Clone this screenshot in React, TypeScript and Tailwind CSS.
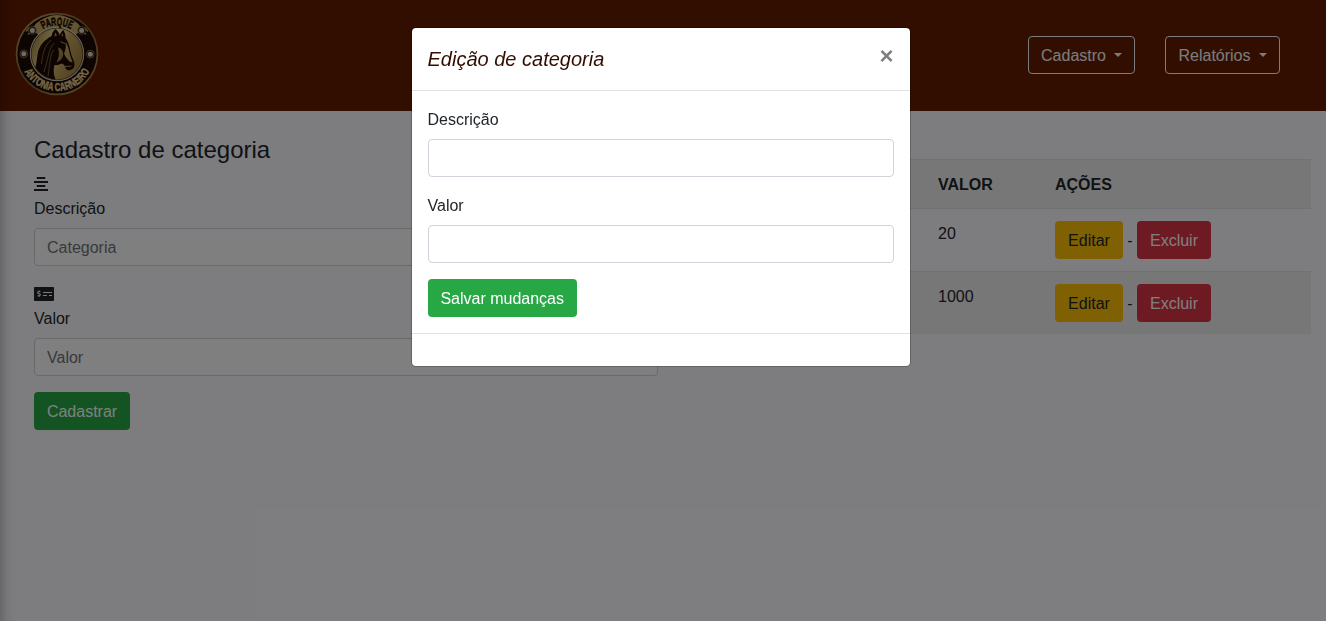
import React from "react";
import { FaMoneyCheckAlt } from "react-icons/fa";

function Rivet({ x, y }: { x: number; y: number }) {
  return (
    <g>
      <circle cx={x} cy={y} r="3.9" fill="#2a1608" stroke="#a88d50" strokeWidth="0.7" />
      <circle cx={x} cy={y} r="2.5" fill="#d8d4cc" />
    </g>
  );
}

function Logo() {
  return (
    <svg width="84" height="84" viewBox="0 0 84 84" className="block">
      <defs>
        <linearGradient id="rim" x1="0" y1="0" x2="1" y2="1">
          <stop offset="0" stopColor="#c8a868" />
          <stop offset="0.5" stopColor="#80652f" />
          <stop offset="1" stopColor="#c0a060" />
        </linearGradient>
        <linearGradient id="sky" x1="0" y1="0" x2="1" y2="0.4">
          <stop offset="0" stopColor="#8f7128" />
          <stop offset="0.45" stopColor="#f0dc94" />
          <stop offset="0.7" stopColor="#c8aa60" />
          <stop offset="1" stopColor="#a88848" />
        </linearGradient>
        <path id="arcTop" d="M13.6 42 A28.4 28.4 0 0 1 70.4 42" />
        <path id="arcBottom" d="M5 42 A37 37 0 0 0 79 42" />
        <clipPath id="disc">
          <circle cx="42" cy="42" r="25.5" />
        </clipPath>
      </defs>
      <circle cx="42" cy="42" r="41.3" fill="url(#rim)" />
      <circle cx="42" cy="42" r="39.6" fill="#1c0a06" />
      <path d="M21 11.5 Q42 -5.5 63 11.5 L67 17 L60 23.5 Q42 7 24 23.5 L17 17 Z" fill="#c8a862" />
      <path d="M11 19.5l3.4-4.2M13 22.5l2.4-2.4M73 19.5l-3.4-4.2M71 22.5l-2.4-2.4" fill="none" stroke="#bb9c58" strokeWidth="1.3" />
      <circle cx="42" cy="42" r="27.2" fill="#d8d4cc" />
      <circle cx="42" cy="42" r="26.3" fill="#5b482a" />
      <circle cx="42" cy="42" r="25.4" fill="url(#sky)" />
      <g clipPath="url(#disc)">
        <path
          d="M40.6 17 C38 19 36.8 21.5 36.6 24 C29 28 24 34 22.6 42 C21.5 50 21.5 54 18 60 L27 69 L41.5 69 C38.5 64 38 58 39.5 53 C42 53.5 45 52.5 47 51.5 C49 52.5 50 54 50.5 56 C51.5 58.5 54.5 59 57 57.3 C59.5 56 60.2 52.5 58.8 49 C57 45.5 56.2 42 55.2 38 C54.4 33.5 53 29.5 50.4 25.5 C50.6 22.5 49.8 20 48.2 18 C46.4 19.5 45.4 21.2 44.8 23.2 C43.8 20.6 42.5 18.5 40.6 17 Z"
          fill="#1c0a06"
        />
        <path d="M50.6 29.5 C53 33.5 53.9 37.5 54.6 41 C55.3 44.5 56.8 47.5 57.6 50.4 L54.6 49.6 C52.5 47 50.2 45 49 41.5 C50.6 38 51.2 34 50.6 29.5 Z" fill="#c0a258" />
        <path d="M43 35.5 C46.8 36.5 48.4 39.5 48.2 42.5 C48 46 45.5 48.8 41.5 50.6 C44.2 45.5 44.6 41 43 35.5 Z" fill="#a4864a" />
        <path d="M45.5 29.6l4.6 2.2M50 54.4c2.4-.4 4.2.4 6.2-.4" fill="none" stroke="#c0a258" strokeWidth="1" />
        <path
          d="M36 28C29 34 27.5 43 26.5 52M39.2 31C33.5 37 33.5 46 29 60M38.8 38C34.5 43 35 53 33 64"
          fill="none"
          stroke="#9c7e42"
          strokeWidth="0.7"
        />
        <path d="M40.5 20.2l1.4 3.4-2.7.8zM48 21v3.6l-1.6-.8z" fill="#b2944e" />
      </g>
      <Rivet x={17.4} y={18.4} />
      <Rivet x={66.6} y={18.4} />
      <Rivet x={8.8} y={41.8} />
      <Rivet x={75.3} y={42.2} />
      <text fontFamily="'Liberation Sans', Arial, sans-serif" fontSize="11.5" fontWeight="700" fill="#160703" stroke="#160703" strokeWidth="0.45">
        <textPath href="#arcTop" startOffset="50%" textAnchor="middle" textLength="29" lengthAdjust="spacingAndGlyphs">
          PARQUE
        </textPath>
      </text>
      <text fontFamily="'Liberation Sans', Arial, sans-serif" fontSize="11.3" fontWeight="700" fill="#e8d292" stroke="#e8d292" strokeWidth="0.35">
        <textPath href="#arcBottom" startOffset="50%" textAnchor="middle" textLength="80" lengthAdjust="spacingAndGlyphs">
          ANTONIA CARNEIRO
        </textPath>
      </text>
    </svg>
  );
}

function AlignCenterIcon() {
  return (
    <svg width="14" height="16" viewBox="0 0 14 16" fill="currentColor">
      <path d="M2.7 1h8.6v2H2.7zM0 5h14v2H0zM2.7 9h8.6v2H2.7zM0 13h14v2H0z" />
    </svg>
  );
}

function MenuButton({ label, width }: { label: string; width: string }) {
  return (
    <button className={`flex h-[38px] items-center justify-center rounded border border-[#f8f9fa] pt-0.5 text-[#f8f9fa] ${width}`}>
      {label}
      <span className="mb-0.5 ml-2 border-x-[4.8px] border-t-[4.8px] border-x-transparent border-t-[#f8f9fa]" />
    </button>
  );
}

function Row({ desc, value, striped }: { desc: string; value: string; striped?: boolean }) {
  return (
    <tr className={striped ? "bg-[#efefef]" : ""}>
      <td className="border-t border-[#dee2e6] px-3 pt-[13px] align-top">{desc}</td>
      <td className="border-t border-[#dee2e6] px-3 pt-[13px] align-top">{value}</td>
      <td className="border-t border-[#dee2e6] p-3 align-top">
        <div className="flex items-center">
          <button className="h-[38px] w-[68px] rounded bg-[#ffc107] pt-0.5 text-[#212529]">Editar</button>
          <span className="w-[14px] pt-0.5 text-center">-</span>
          <button className="h-[38px] w-[74px] rounded bg-[#dc3545] pt-0.5 text-white">Excluir</button>
        </div>
      </td>
    </tr>
  );
}

function ModalField({ label }: { label: string }) {
  return (
    <label className="mb-4 block">
      <span className="mb-1.5 block leading-[26px]">{label}</span>
      <input className="block h-[38px] w-full rounded border border-[#ced4da] bg-white px-3" />
    </label>
  );
}

export default function App() {
  return (
    <div className="relative h-[621px] overflow-hidden bg-[#fbfbff] font-['Liberation_Sans',Arial,sans-serif] text-base leading-6 text-[#212529]">
      <header className="flex h-[111px] items-start justify-between bg-[#641c00] pr-[46px] pl-[15px]">
        <div className="pt-3">
          <Logo />
        </div>
        <nav className="flex gap-[30px] pt-9">
          <MenuButton label="Cadastro" width="w-[107px]" />
          <MenuButton label="Relatórios" width="w-[115px]" />
        </nav>
      </header>

      <main className="grid grid-cols-2 pl-[19px]">
        <section className="px-[15px] pt-6">
          <h4 className="mb-2 text-2xl leading-[29px]">Cadastro de categoria</h4>
          <div className="flex h-6 items-center">
            <AlignCenterIcon />
          </div>
          <label className="mb-1.5 block leading-[26px]">Descrição</label>
          <input
            className="mb-4 block h-[38px] w-full rounded border border-[#ced4da] bg-white px-3 pt-0.5 placeholder:text-[#6c757d]"
            placeholder="Categoria"
          />
          <div className="flex h-6 items-center">
            <FaMoneyCheckAlt className="h-4 w-5" />
          </div>
          <label className="mb-1.5 block leading-[26px]">Valor</label>
          <input
            className="mb-4 block h-[38px] w-full rounded border border-[#ced4da] bg-white px-3 pt-0.5 placeholder:text-[#6c757d]"
            placeholder="Valor"
          />
          <button className="h-[38px] w-24 rounded bg-[#28a745] pt-0.5 text-white">Cadastrar</button>
        </section>

        <section className="px-[15px] pt-12">
          <table className="w-full table-fixed border-separate border-spacing-0 text-left">
            <colgroup>
              <col />
              <col className="w-[117px]" />
              <col className="w-[268px]" />
            </colgroup>
            <thead>
              <tr className="bg-[#efefef]">
                <th className="border-t border-[#dee2e6] px-3 pt-[13px] pb-[11px]" />
                <th className="border-t border-[#dee2e6] px-3 pt-[13px] pb-[11px]">VALOR</th>
                <th className="border-t border-[#dee2e6] px-3 pt-[13px] pb-[11px]">AÇÕES</th>
              </tr>
            </thead>
            <tbody>
              <Row desc="" value="20" />
              <Row desc="" value="1000" striped />
            </tbody>
          </table>
        </section>
      </main>

      <div className="absolute -top-5 -left-5 h-[661px] w-5 shadow-[0_0_15px_rgba(0,0,0,0.35)]" />
      <div className="absolute inset-0 bg-black/50" />

      <div className="absolute inset-0 flex items-start justify-center pt-[27px] pr-[5px] will-change-transform">
        <div role="dialog" className="w-[500px] rounded-[5px] border border-black/20 bg-white bg-clip-padding">
          <div className="flex items-start justify-between border-b border-[#dee2e6] p-4">
            <h5 className="text-xl leading-[30px] text-[#320e00] italic">Edição de categoria</h5>
            <button className="text-2xl leading-6 font-bold text-black/50">×</button>
          </div>
          <div className="p-4">
            <ModalField label="Descrição" />
            <ModalField label="Valor" />
            <button className="block h-[38px] w-[149.4px] rounded bg-[#28a745] pt-0.5 text-white">Salvar mudanças</button>
          </div>
          <div className="h-[33px] border-t border-[#dee2e6]" />
        </div>
      </div>
    </div>
  );
}
